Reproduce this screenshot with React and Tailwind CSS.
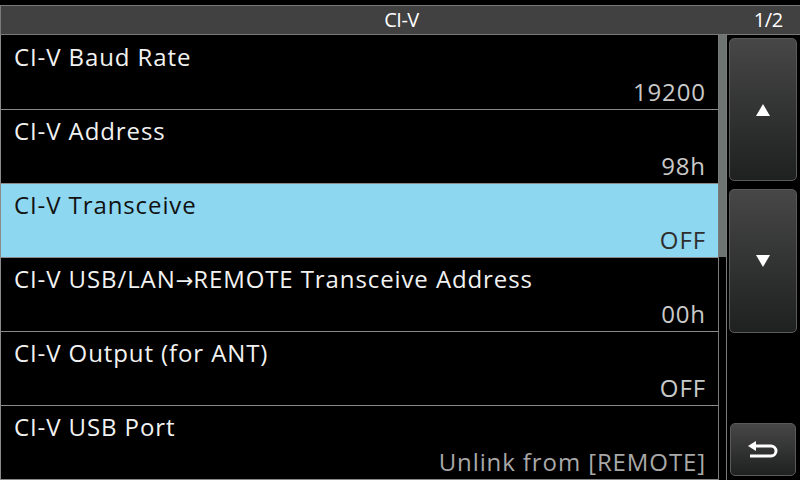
import React from 'react';

const rows = [
  { label: 'CI-V Baud Rate', value: '19200', h: 'h-[75px]', first: true },
  { label: 'CI-V Address', value: '98h', h: 'h-[74px]' },
  { label: 'CI-V Transceive', value: 'OFF', h: 'h-[74px]', active: true },
  { label: 'CI-V USB/LAN', arrow: 'REMOTE Transceive Address', value: '00h', h: 'h-[74px]' },
  { label: 'CI-V Output (for ANT)', value: 'OFF', h: 'h-[74px]' },
  { label: 'CI-V USB Port', value: 'Unlink from [REMOTE]', h: 'h-[74px]', dim: true },
];

function Row({ label, arrow, value, h, active, dim, first }) {
  return (
    <div
      className={`${h} border-b border-[#8a8a8a] flex flex-col justify-between pl-[13px] pr-[12px] ${
        first ? 'pt-[7px]' : 'pt-[6px]'
      } pb-[2px] tracking-[0.9px] ${active ? 'bg-[#8ed7f0]' : 'bg-black'}`}
    >
      <div className={`text-[24px] leading-[30px] whitespace-nowrap ${active ? 'text-[#111]' : 'text-[#f2f2f2]'}`}>
        {label}
        {arrow && (
          <>
            <span className="tracking-normal" style={{ fontFamily: '"DejaVu Sans", sans-serif', fontSize: '21px' }}>
              →
            </span>
            {arrow}
          </>
        )}
      </div>
      <div
        className={`text-right text-[24px] leading-[30px] ${
          active ? 'text-[#2e2e2e]' : dim ? 'text-[#a8a8a8]' : 'text-[#c9c9c9]'
        }`}
      >
        {value}
      </div>
    </div>
  );
}

function SideButton({ className, children }) {
  return (
    <div
      className={`rounded-[5px] border border-[#5a5a5a] bg-gradient-to-b from-[#474747] to-[#1f2120] flex items-center justify-center ${className}`}
    >
      {children}
    </div>
  );
}

export default function App() {
  return (
    <div
      className="w-[800px] h-[480px] bg-black overflow-hidden flex flex-col"
      style={{ fontFamily: '"Open Sans", "Noto Sans", sans-serif' }}
    >
      <div className="h-[5px] shrink-0" />
      <div className="h-[30px] shrink-0 bg-[#414141] border-t border-b border-l border-[#7a7a7a] flex items-center relative">
        <div className="flex-1 text-center text-white text-[20px] leading-[28px] tracking-[-0.5px] pl-[2px]">CI-V</div>
        <div className="absolute right-[17px] top-[0px] text-white text-[20px] leading-[28px] tracking-[-0.3px]">1/2</div>
      </div>
      <div className="flex flex-1 min-h-0">
        <div className="w-[718px] border-l border-[#8a8a8a] flex flex-col">
          {rows.map((r) => (
            <Row key={r.label + (r.arrow || '')} {...r} />
          ))}
        </div>
        <div className="w-[9px] border-x border-[#7a7a7a] bg-black flex flex-col">
          <div className="h-[222px] bg-[#6e7471]" />
        </div>
        <div className="flex-1 flex flex-col pl-[2px] pr-[3px] pt-[3px] pb-[4px]">
          <SideButton className="h-[143px]">
            <svg width="16" height="14" viewBox="0 0 16 14">
              <polygon points="8,1 15,13 1,13" fill="#fff" />
            </svg>
          </SideButton>
          <SideButton className="h-[144px] mt-[8px]">
            <svg width="16" height="14" viewBox="0 0 16 14">
              <polygon points="1,1 15,1 8,13" fill="#fff" />
            </svg>
          </SideButton>
          <div className="flex-1" />
          <SideButton className="h-[53px] mx-[1px]">
            <svg width="30" height="18" viewBox="0 0 30 18">
              <path d="M6 5 H23 A5 5 0 0 1 23 15 H2" fill="none" stroke="#fff" strokeWidth="3" />
              <polygon points="0,5 8,0 8,10" fill="#fff" />
            </svg>
          </SideButton>
        </div>
      </div>
    </div>
  );
}
